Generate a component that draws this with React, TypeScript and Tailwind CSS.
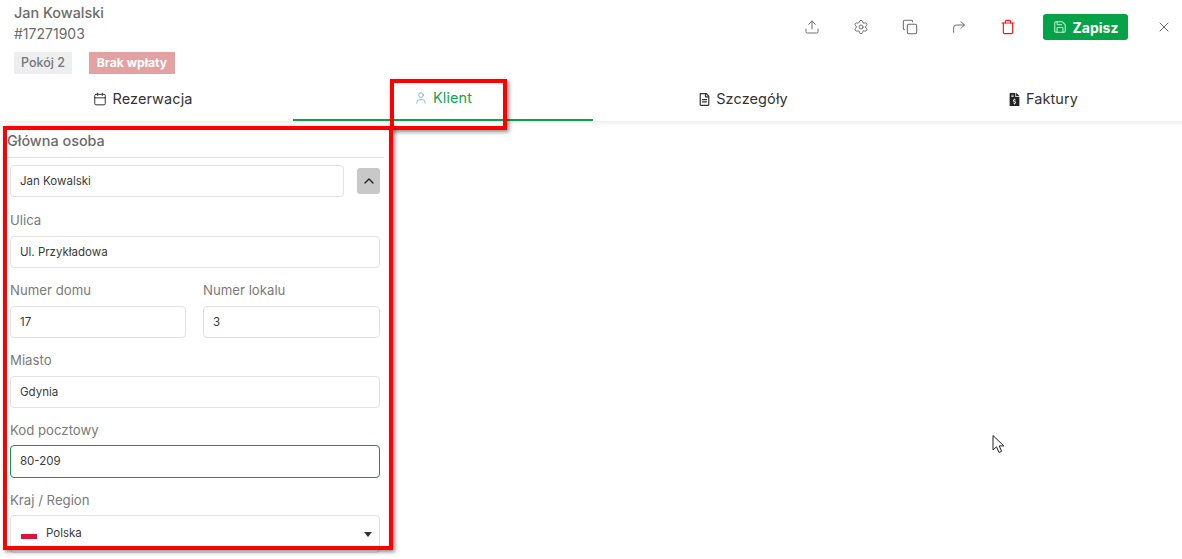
import React from 'react';
import { Calendar, ChevronUp, Copy, CornerUpRight, Save, Settings, Trash, Upload, User, X } from 'lucide-react';
import { FaFileInvoiceDollar, FaRegFileAlt } from 'react-icons/fa';

const FONT = "font-['Inter','Open_Sans',sans-serif]";

function Field({ label, value, active }: { label: string; value: string; active?: boolean }) {
  return (
    <div className="flex flex-col">
      <div className={`text-[13.2px] leading-[18px] pt-[4px] text-[#7a7a7a] ${active ? 'h-[28px]' : 'h-[29px]'}`}>{label}</div>
      <div
        className={`rounded-[4px] border bg-white pl-[9px] pt-[1px] flex items-center text-[11.5px] text-[#3a3a3a] ${
          active ? 'h-[33px] border-[#16934a]' : 'h-[32px] border-[#e2e2e2]'
        }`}
      >
        {value}
      </div>
    </div>
  );
}

function Tab({ label, icon, active }: { label: string; icon: React.ReactNode; active?: boolean }) {
  return (
    <div
      className={`h-[44px] flex items-center justify-center gap-[5px] text-[14.5px] tracking-[0.1px] ${
        active ? 'border-b-2 border-[#0ea14b] text-[#17a34f]' : 'text-[#333333]'
      }`}
    >
      {icon}
      {label}
    </div>
  );
}

export default function App() {
  return (
    <div className={`${FONT} relative w-[1182px] h-[559px] overflow-hidden bg-white`}>
      {/* Header */}
      <div className="h-[77px] pl-[14px] pr-[10px] flex justify-between">
        <div>
          <div className="pt-[4px] text-[14.4px] leading-[18px] font-medium text-[#6b6b6b]">Jan Kowalski</div>
          <div className="mt-[3px] text-[14px] leading-[18px] text-[#6b6b6b]">#17271903</div>
          <div className="mt-[9px] flex gap-[17px]">
            <span className="h-[22px] w-[58px] flex items-center justify-center bg-[#eceef0] text-[12.5px] font-medium text-[#777777]">
              Pokój 2
            </span>
            <span className="h-[22px] w-[86px] flex items-center justify-center bg-[#e4a1a1] text-[12.2px] font-bold text-white">
              Brak wpłaty
            </span>
          </div>
        </div>
        <div className="flex items-start pt-[14px]">
          <div className="flex items-center gap-[33px] h-[26px] text-[#6e6e6e]">
            <Upload size={16} strokeWidth={1.5} />
            <Settings size={16} strokeWidth={1.5} />
            <Copy size={16} strokeWidth={1.6} />
            <CornerUpRight size={16} strokeWidth={1.5} />
            <Trash size={16} strokeWidth={1.8} className="text-[#ff1a1a]" />
          </div>
          <button className="ml-[27px] h-[26px] w-[85px] rounded-[3px] bg-[#04a348] flex items-center justify-center gap-[6px] text-[14px] font-bold text-white">
            <Save size={14} strokeWidth={1.8} className="text-[#c9eed8]" />
            Zapisz
          </button>
          <div className="ml-[28px] h-[26px] flex items-center text-[#666666]">
            <X size={16} strokeWidth={1.5} />
          </div>
        </div>
      </div>

      {/* Tabs */}
      <div className="-ml-[7px] w-[1200px] grid grid-cols-4 shadow-[0_2px_4px_rgba(0,0,0,0.08)]">
        <Tab label="Rezerwacja" icon={<Calendar size={14} strokeWidth={1.7} />} />
        <Tab label="Klient" active icon={<User size={14} strokeWidth={1.5} className="text-[#6cb4ee]" />} />
        <Tab label="Szczegóły" icon={<FaRegFileAlt size={13} />} />
        <Tab label="Faktury" icon={<FaFileInvoiceDollar size={13} className="text-[#222222]" />} />
      </div>

      {/* Client form */}
      <div className="w-[384px] pl-[7px] pt-[9px]">
        <div className="h-[28px] border-b border-[#e2e2e2] text-[14.4px] font-medium text-[#6b6b6b]">Główna osoba</div>
        <div className="pl-[3px] pr-[4px]">
          <div className="mt-[7px] flex items-center justify-between">
            <div className="h-[32px] w-[334px] rounded-[4px] border border-[#e2e2e2] pl-[9px] pt-[1px] flex items-center text-[11.5px] text-[#3a3a3a]">
              Jan Kowalski
            </div>
            <div className="h-[26px] w-[23px] rounded-[3px] bg-[#c8c8c8] flex items-center justify-center text-[#222222]">
              <ChevronUp size={16} strokeWidth={2} />
            </div>
          </div>
          <div className="mt-[10px] flex flex-col gap-[9px]">
            <Field label="Ulica" value="Ul. Przykładowa" />
            <div className="grid grid-cols-[176px_177px] gap-[17px]">
              <Field label="Numer domu" value="17" />
              <Field label="Numer lokalu" value="3" />
            </div>
            <Field label="Miasto" value="Gdynia" />
            <Field label="Kod pocztowy" value="80-209" active />
            <div className="flex flex-col">
              <div className="h-[28px] text-[13.2px] leading-[18px] pt-[4px] text-[#7a7a7a]">Kraj / Region</div>
              <div className="h-[38px] rounded-[4px] border border-[#e2e2e2] pl-[10px] pr-[7px] flex items-center justify-between text-[11.5px] text-[#3a3a3a]">
                <span className="flex items-center gap-[9px]">
                  <span className="-mt-[1px] w-[16px] h-[10px] flex flex-col">
                    <span className="h-[5px] bg-white" />
                    <span className="h-[5px] bg-[#dc143c]" />
                  </span>
                  Polska
                </span>
                <span className="w-0 h-0 border-x-[4.5px] border-x-transparent border-t-[5px] border-t-[#333333]" />
              </div>
            </div>
          </div>
        </div>
      </div>

      {/* Annotation frames */}
      <div className="absolute left-[390px] top-[79px] w-[117px] h-[51px] border-[4px] border-[#ff0000] shadow-[2px_2px_4px_rgba(0,0,0,0.45)]" />
      <div className="absolute left-[3px] top-[126px] w-[390px] h-[424px] border-[4px] border-[#ff0000] shadow-[2px_2px_4px_rgba(0,0,0,0.45)]" />

      {/* Mouse pointer */}
      <svg className="absolute left-[991px] top-[434px]" width="15" height="22" viewBox="0 0 15 22">
        <path d="M2 1.5V16l3.5-3.2L8 18.5l2.6-1.2-2.4-5.4h4.6z" fill="white" stroke="#222222" strokeWidth="1" />
      </svg>
    </div>
  );
}
